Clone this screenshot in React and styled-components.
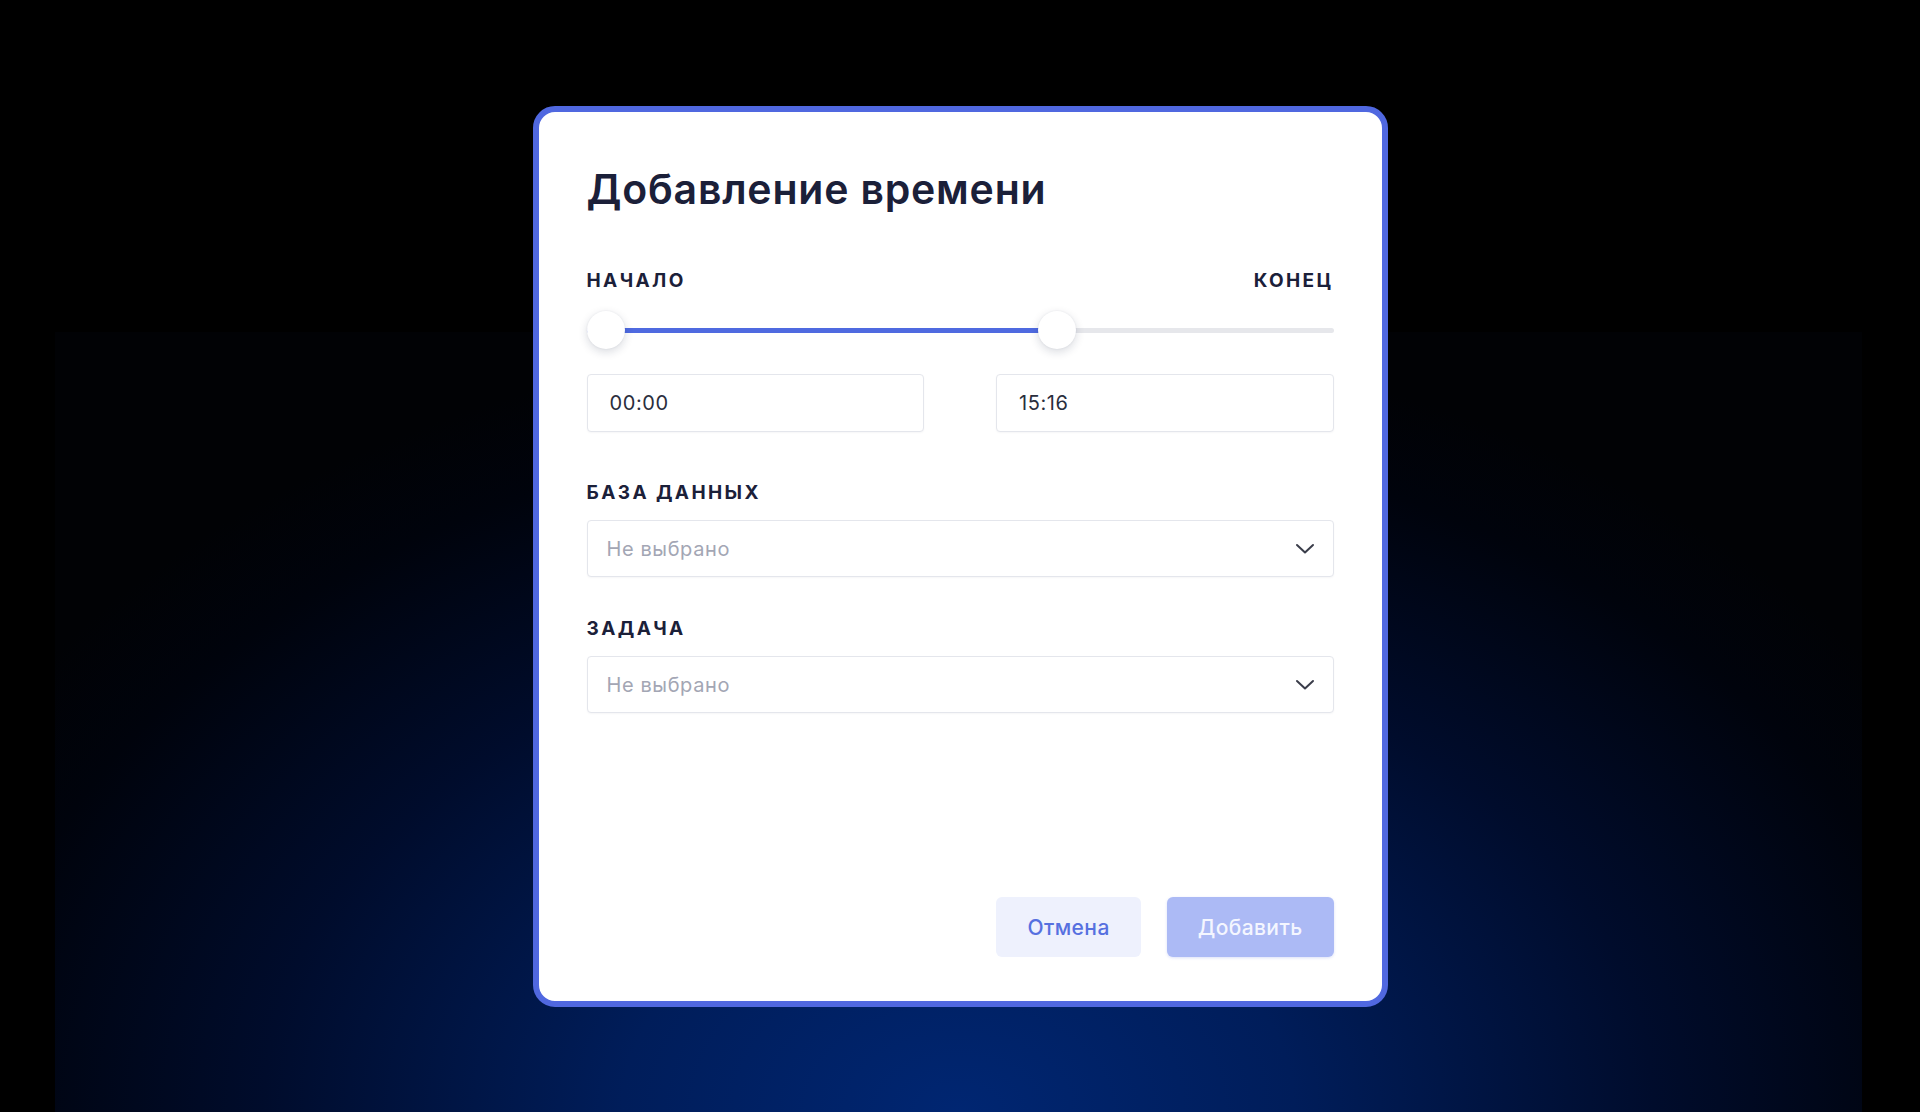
import React, { useState } from 'react';
import styled, { createGlobalStyle } from 'styled-components';
import * as Slider from '@radix-ui/react-slider';

const GlobalStyle = createGlobalStyle`
  * { box-sizing: border-box; }
  html, body { margin: 0; padding: 0; background: #000; }
  body {
    font-family: Inter, "Noto Sans", "Liberation Sans", sans-serif;
    -webkit-font-smoothing: antialiased;
  }
`;

const DAY_MINUTES = 1440;

const toTime = (minutes) => {
  const h = String(Math.floor(minutes / 60)).padStart(2, '0');
  const m = String(minutes % 60).padStart(2, '0');
  return `${h}:${m}`;
};

const fromTime = (text) => {
  const match = /^(\d{1,2}):(\d{2})$/.exec(text.trim());
  if (!match) return null;
  const total = Number(match[1]) * 60 + Number(match[2]);
  return total < DAY_MINUTES ? total : null;
};

const Page = styled.div`
  position: relative;
  min-height: 100vh;
  padding-top: 106px;
  overflow: hidden;

  &::before {
    content: '';
    position: absolute;
    left: 55px;
    right: 58px;
    top: 332px;
    bottom: 0;
    background: radial-gradient(
      ellipse 62% 100% at 50% 100%,
      #002672 0%,
      #001d5a 30%,
      #000c2c 62%,
      #00030c 88%,
      #010205 100%
    );
  }
`;

const Dialog = styled.div`
  position: relative;
  width: 855px;
  height: 901px;
  margin: 0 auto;
  display: flex;
  flex-direction: column;
  padding: 54px 48px 44px;
  background: #fff;
  border: 6px solid #5068e0;
  border-radius: 22px;
`;

const Title = styled.h1`
  margin: 0;
  font-size: 41px;
  line-height: 46px;
  font-weight: 600;
  letter-spacing: 0.8px;
  color: #1b2039;
`;

const RangeHeader = styled.div`
  display: flex;
  justify-content: space-between;
  margin-top: 58px;
`;

const Label = styled.div`
  font-size: 19px;
  line-height: 22px;
  font-weight: 700;
  letter-spacing: 2.4px;
  color: #1b2039;
  margin-top: ${({ $gap }) => $gap || 0}px;
`;

const SliderRoot = styled(Slider.Root)`
  position: relative;
  display: flex;
  align-items: center;
  height: 38px;
  margin-top: 19px;
  user-select: none;
  touch-action: none;
`;

const SliderTrack = styled(Slider.Track)`
  position: relative;
  flex-grow: 1;
  height: 5px;
  border-radius: 3px;
  background: #e6e7eb;
`;

const SliderRange = styled(Slider.Range)`
  position: absolute;
  height: 100%;
  border-radius: 3px;
  background: #4f6ae0;
`;

const SliderThumb = styled(Slider.Thumb)`
  display: block;
  width: 38px;
  height: 38px;
  border-radius: 50%;
  background: #fff;
  box-shadow: 0 3px 10px rgba(20, 30, 60, 0.16), 0 0 2px rgba(20, 30, 60, 0.08);
  cursor: grab;
  outline: none;
`;

const TimeRow = styled.div`
  display: grid;
  grid-template-columns: 1fr 1fr;
  gap: 72px;
  margin-top: 25px;
`;

const TimeInput = styled.input`
  height: 58px;
  width: 100%;
  padding: 0 22px;
  border: 1px solid #e4e6ec;
  border-radius: 4px;
  font-family: inherit;
  font-size: 20px;
  letter-spacing: 0.6px;
  color: #2a2e3d;
  background: #fff;
  box-shadow: 0 1px 2px rgba(20, 30, 60, 0.04);

  &:focus {
    outline: none;
    border-color: #5068e0;
  }
`;

const SelectWrap = styled.div`
  position: relative;
  margin-top: ${({ $gap }) => $gap}px;
`;

const Select = styled.select`
  appearance: none;
  width: 100%;
  height: 57px;
  padding: 0 56px 0 19px;
  border: 1px solid #e4e6ec;
  border-radius: 4px;
  background: #fff;
  font-family: inherit;
  font-size: 20px;
  letter-spacing: 0.6px;
  color: ${({ $empty }) => ($empty ? '#a3a6b4' : '#2a2e3d')};
  box-shadow: 0 1px 2px rgba(20, 30, 60, 0.04);
  cursor: pointer;

  &:focus {
    outline: none;
    border-color: #5068e0;
  }
`;

const Chevron = styled.svg`
  position: absolute;
  right: 19px;
  top: 50%;
  transform: translateY(-50%);
  pointer-events: none;
`;

const Actions = styled.div`
  display: flex;
  justify-content: flex-end;
  gap: 26px;
  margin-top: auto;
`;

const Button = styled.button`
  height: 60px;
  padding: 0 31px;
  border: none;
  border-radius: 6px;
  font-family: inherit;
  font-size: 21px;
  font-weight: 500;
  letter-spacing: 0.4px;
  cursor: pointer;
  background: ${({ $primary }) => ($primary ? '#acbaf5' : '#eef1fd')};
  color: ${({ $primary }) => ($primary ? '#f4f6ff' : '#5670e0')};
  box-shadow: ${({ $primary }) => ($primary ? '0 1px 3px rgba(80, 104, 224, 0.2)' : 'none')};

  &:disabled {
    cursor: default;
  }
`;

const ChevronIcon = () => (
  <Chevron width="20" height="12" viewBox="0 0 20 12" fill="none">
    <path d="M2 2 L10 9.5 L18 2" stroke="#3a3d4a" strokeWidth="2" strokeLinecap="round" strokeLinejoin="round" />
  </Chevron>
);

const PickField = ({ label, gap, options, value, onChange }) => (
  <>
    <Label $gap={gap}>{label}</Label>
    <SelectWrap $gap={16}>
      <Select $empty={!value} value={value} onChange={(e) => onChange(e.target.value)}>
        <option value="">Не выбрано</option>
        {options.map((o) => (
          <option key={o} value={o}>{o}</option>
        ))}
      </Select>
      <ChevronIcon />
    </SelectWrap>
  </>
);

const App = () => {
  const [range, setRange] = useState([0, 916]);
  const [startText, setStartText] = useState(toTime(0));
  const [endText, setEndText] = useState(toTime(916));
  const [database, setDatabase] = useState('');
  const [task, setTask] = useState('');

  const handleSlide = (next) => {
    setRange(next);
    setStartText(toTime(next[0]));
    setEndText(toTime(next[1]));
  };

  const handleText = (index, text) => {
    if (index === 0) setStartText(text);
    else setEndText(text);
    const minutes = fromTime(text);
    if (minutes === null) return;
    const next = [...range];
    next[index] = minutes;
    if (next[0] <= next[1]) setRange(next);
  };

  const canSubmit = database && task;

  return (
    <>
      <GlobalStyle />
      <Page>
        <Dialog role="dialog" aria-labelledby="add-time-title">
          <Title id="add-time-title">Добавление времени</Title>

          <RangeHeader>
            <Label>НАЧАЛО</Label>
            <Label>КОНЕЦ</Label>
          </RangeHeader>

          <SliderRoot value={range} onValueChange={handleSlide} min={0} max={DAY_MINUTES - 1} step={1}>
            <SliderTrack>
              <SliderRange />
            </SliderTrack>
            <SliderThumb aria-label="Начало" />
            <SliderThumb aria-label="Конец" />
          </SliderRoot>

          <TimeRow>
            <TimeInput value={startText} onChange={(e) => handleText(0, e.target.value)} />
            <TimeInput value={endText} onChange={(e) => handleText(1, e.target.value)} />
          </TimeRow>

          <PickField
            label="БАЗА ДАННЫХ"
            gap={50}
            options={['Основная', 'Архив']}
            value={database}
            onChange={setDatabase}
          />
          <PickField
            label="ЗАДАЧА"
            gap={41}
            options={['Разработка', 'Тестирование', 'Ревью']}
            value={task}
            onChange={setTask}
          />

          <Actions>
            <Button type="button">Отмена</Button>
            <Button type="button" $primary disabled={!canSubmit}>Добавить</Button>
          </Actions>
        </Dialog>
      </Page>
    </>
  );
};

export default App;
